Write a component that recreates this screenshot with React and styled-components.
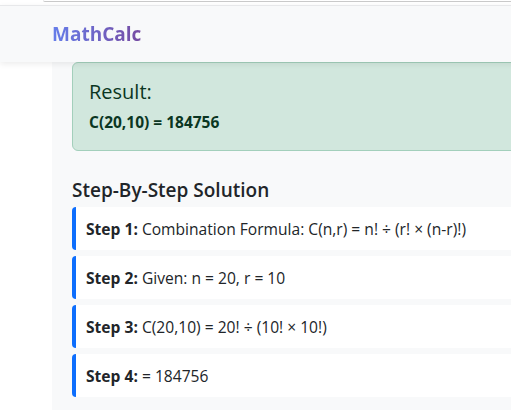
import React from "react"
import styled, { createGlobalStyle } from "styled-components"

const steps = [
  { label: "Step 1:", text: "Combination Formula: C(n,r) = n! ÷ (r! × (n-r)!)" },
  { label: "Step 2:", text: "Given: n = 20, r = 10" },
  { label: "Step 3:", text: "C(20,10) = 20! ÷ (10! × 10!)" },
  { label: "Step 4:", text: "= 184756" },
]

export default function App() {
  return (
    <>
      <GlobalStyle />
      <Page>
        <TopStrip>
          <FieldEdge />
        </TopStrip>
        <Navbar>
          <Brand>MathCalc</Brand>
        </Navbar>
        <Main>
          <Gutter />
          <Panel>
            <ResultBox>
              <ResultTitle>Result:</ResultTitle>
              <ResultValue>C(20,10) = 184756</ResultValue>
            </ResultBox>
            <SectionTitle>Step-By-Step Solution</SectionTitle>
            {steps.map(step => (
              <StepCard key={step.label}>
                <StepLabel>{step.label}</StepLabel> {step.text}
              </StepCard>
            ))}
          </Panel>
        </Main>
      </Page>
    </>
  )
}

const GlobalStyle = createGlobalStyle`
  body {
    margin: 0;
    background: #fff;
    font-family: "Open Sans", "Noto Sans", sans-serif;
    color: #212529;
    overflow: hidden;
  }
`

const Page = styled.div`
  width: 720px;
`

const TopStrip = styled.div`
  height: 5px;
  background: #fff;
`

const FieldEdge = styled.div`
  margin-left: 43px;
  height: 1px;
  border-bottom: 1px solid #c9c9c9;
  border-bottom-left-radius: 4px;
`

const Navbar = styled.nav`
  height: 56px;
  display: flex;
  align-items: center;
  padding-left: 52px;
  background: #f8f9fa;
  border-top: 1px solid #e7e8ea;
  box-shadow: 0 2px 6px rgba(0, 0, 0, 0.08);
  position: relative;
  z-index: 1;
`

const Brand = styled.span`
  font-size: 19px;
  font-weight: 700;
  background: linear-gradient(90deg, #667eea, #764ba2);
  -webkit-background-clip: text;
  background-clip: text;
  color: transparent;
`

const Main = styled.div`
  display: flex;
`

const Gutter = styled.div`
  width: 52px;
  flex-shrink: 0;
  background: #fff;
`

const Panel = styled.div`
  flex: 1;
  background: #f8f9fa;
  padding: 0 0 10px 20px;
`

const ResultBox = styled.div`
  height: 89px;
  box-sizing: border-box;
  padding: 16px;
  background: #d1e7dd;
  border: 1px solid #a3cfbb;
  border-radius: 6px;
  color: #0a3622;
`

const ResultTitle = styled.h4`
  margin: 1px 0 8px;
  font-size: 20px;
  font-weight: 500;
  line-height: 1.2;
`

const ResultValue = styled.div`
  font-size: 15.5px;
  font-weight: 700;
  line-height: 1.3;
`

const SectionTitle = styled.h5`
  margin: 28px 0 5px;
  font-size: 19px;
  font-weight: 600;
  line-height: 1.2;
`

const StepCard = styled.div`
  height: 43px;
  box-sizing: border-box;
  margin-bottom: 6px;
  padding: 12px 10px 10px;
  background: #fff;
  border-left: 4px solid #0d6efd;
  border-radius: 4px;
  font-size: 15.6px;
  line-height: 21px;
  white-space: nowrap;
`

const StepLabel = styled.strong`
  font-weight: 700;
`
